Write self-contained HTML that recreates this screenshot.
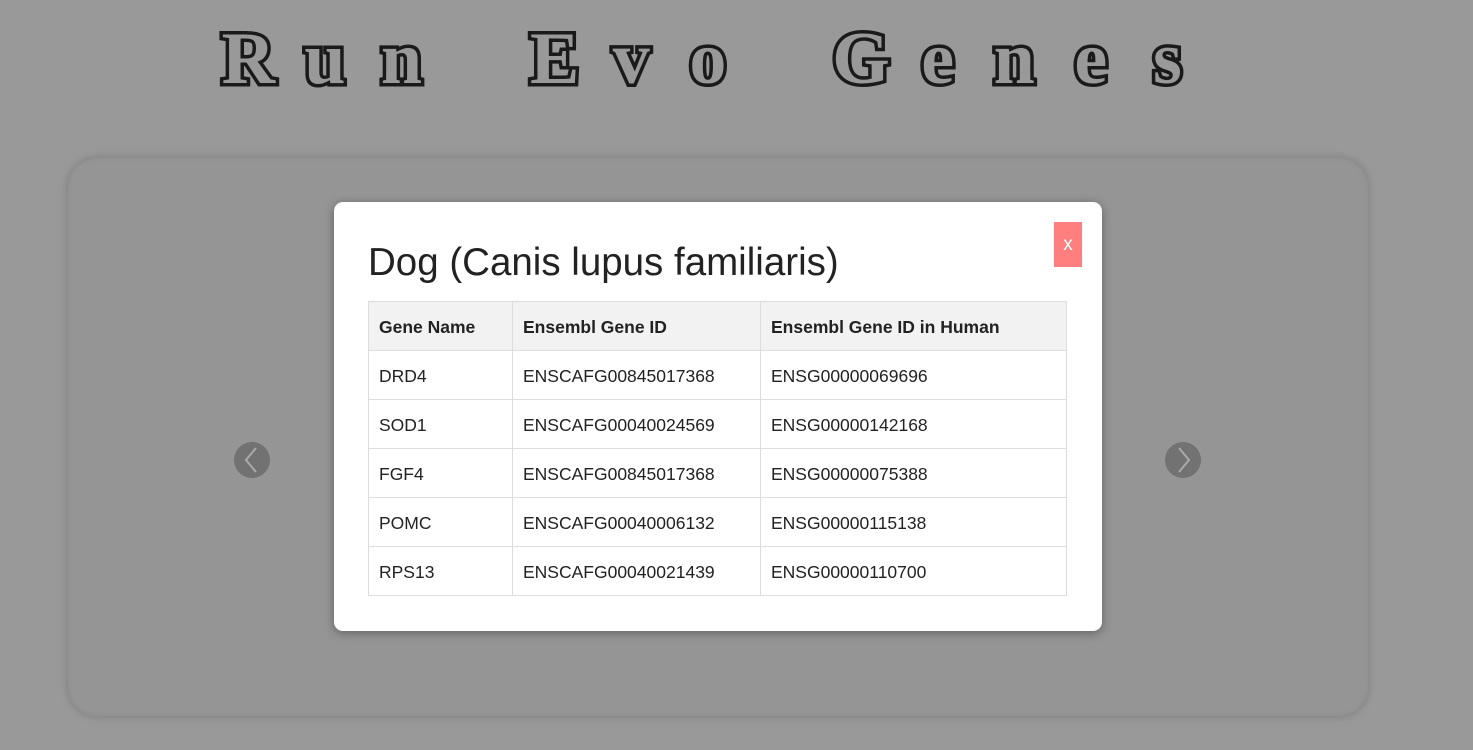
<!DOCTYPE html>
<html><head><style>
body{margin:0;width:1473px;height:750px;background:#999;overflow:hidden;position:relative;font-family:"Liberation Sans",sans-serif;}
.title{position:absolute;left:210px;top:22px;line-height:1;font-family:"Liberation Serif",serif;font-weight:bold;font-size:74px;color:#999;-webkit-text-stroke:7px #1a1a1a;paint-order:stroke fill;white-space:nowrap;}
.title span{display:inline-block;width:76.6px;text-align:center;}
.panel{position:absolute;left:68px;top:158px;width:1300px;height:558px;border-radius:30px;background:#959595;box-shadow:0 0 6px 3px #8a8a8a, inset 0 0 4px #8d8d8d;}
.arrow{position:absolute;width:36px;height:36px;border-radius:50%;background:#727272;top:442px;}
.arrow svg{position:absolute;left:0;top:0}
.modal{position:absolute;left:334px;top:202px;width:768px;height:429px;background:#fff;border-radius:9px;box-shadow:0 2px 10px rgba(0,0,0,.35);}
.modal h2{position:absolute;left:34px;top:39px;margin:0;font-weight:normal;font-size:38.5px;color:#222;}
.x{position:absolute;left:720px;top:20px;width:28px;height:45px;background:#ff7f7f;color:#fff;font-size:19px;line-height:45px;text-align:center;}
table{position:absolute;left:34px;top:99px;border-collapse:collapse;font-size:17.5px;color:#222;}
td,th{border:1px solid #ddd;height:45px;padding:3px 10px 0;text-align:left;}
th{background:#f2f2f2;font-weight:bold;}
</style></head><body>
<div class="title"><span>R</span><span>u</span><span>n</span><span> </span><span>E</span><span>v</span><span>o</span><span> </span><span>G</span><span>e</span><span>n</span><span>e</span><span>s</span></div>
<div class="panel"></div>
<div class="arrow" style="left:234px"><svg width="36" height="36"><path d="M22 6 L12 18 L22 30" stroke="#aaa" stroke-width="2" fill="none"/></svg></div>
<div class="arrow" style="left:1165px"><svg width="36" height="36"><path d="M14 6 L24 18 L14 30" stroke="#aaa" stroke-width="2" fill="none"/></svg></div>
<div class="modal">
<h2>Dog (Canis lupus familiaris)</h2>
<div class="x">x</div>
<table>
<tr><th style="width:123px">Gene Name</th><th style="width:227px">Ensembl Gene ID</th><th style="width:285px">Ensembl Gene ID in Human</th></tr>
<tr><td>DRD4</td><td>ENSCAFG00845017368</td><td>ENSG00000069696</td></tr>
<tr><td>SOD1</td><td>ENSCAFG00040024569</td><td>ENSG00000142168</td></tr>
<tr><td>FGF4</td><td>ENSCAFG00845017368</td><td>ENSG00000075388</td></tr>
<tr><td>POMC</td><td>ENSCAFG00040006132</td><td>ENSG00000115138</td></tr>
<tr><td>RPS13</td><td>ENSCAFG00040021439</td><td>ENSG00000110700</td></tr>
</table>
</div>
</body></html>
